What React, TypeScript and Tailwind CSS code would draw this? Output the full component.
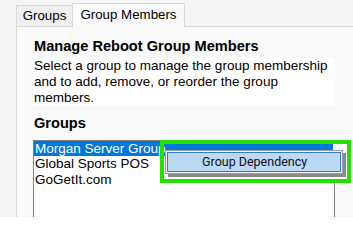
export default function App() {
  const groups = ["Morgan Server Group", "Global Sports POS", "GoGetIt.com"];

  return (
    <div className="relative w-[353px] h-[217px] overflow-hidden bg-[#f4f4f4] font-['Liberation_Sans',Arial,sans-serif] text-[13.5px] text-black">
      {/* tab strip */}
      <div className="flex items-end pl-[16px] pt-[3px] h-[26px] text-[13.3px]">
        <div className="h-[21px] w-[56px] border border-b-0 border-r-0 border-[#d9d9d9] bg-[#f0f0f0] flex items-center justify-center leading-none">
          Groups
        </div>
        <div className="relative z-10 h-[24px] w-[113px] -mb-px border border-b-0 border-[#d9d9d9] bg-[#f9f9f9] flex items-center justify-center leading-none pb-[2px]">
          Group Members
        </div>
      </div>

      {/* tab page */}
      <div className="ml-[16px] h-[200px] border-l border-t border-[#d9d9d9] bg-[#f9f9f9] pl-[16px] pt-[10px]">
        <h1 className="text-[14.6px] font-bold leading-[18px] pl-px">Manage Reboot Group Members</h1>
        <p className="mt-[3px] w-[301px] bg-white pl-px leading-[16px]">
          Select a group to manage the group membership and to add, remove, or reorder the group members.
        </p>
        <h2 className="mt-[8px] text-[14.6px] font-bold leading-[18px] pl-px">Groups</h2>
        <ul className="mt-[8px] w-[302px] h-[90px] border border-[#828282] bg-white">
          {groups.map((g, i) => (
            <li
              key={g}
              className={
                i === 0
                  ? "h-[15px] leading-[15px] pl-px bg-[#0078d7] text-white"
                  : "h-[16px] leading-[16px] pl-px"
              }
            >
              {g}
            </li>
          ))}
        </ul>
      </div>

      {/* context menu, ringed in green */}
      <div className="absolute left-[333px] top-[143px] w-[14px] h-[36px] bg-white" />
      <div className="absolute left-[160px] top-[140px] w-[191px] h-[43px] border-[4px] border-[#22e000]" />
      <div className="absolute left-[165px] top-[150px] w-[178px] h-[24px] border border-[#a0a0a0] bg-[#f2f2f2] p-[1px] shadow-[3px_3px_0_#8a8a8a]">
        <div className="h-full border border-[#2f7fd0] bg-[#bcd9f4] pl-[34px] font-['Roboto','Noto_Sans',sans-serif] text-[12.5px] leading-[18px] text-[#101020]">
          Group Dependency
        </div>
      </div>
    </div>
  );
}
